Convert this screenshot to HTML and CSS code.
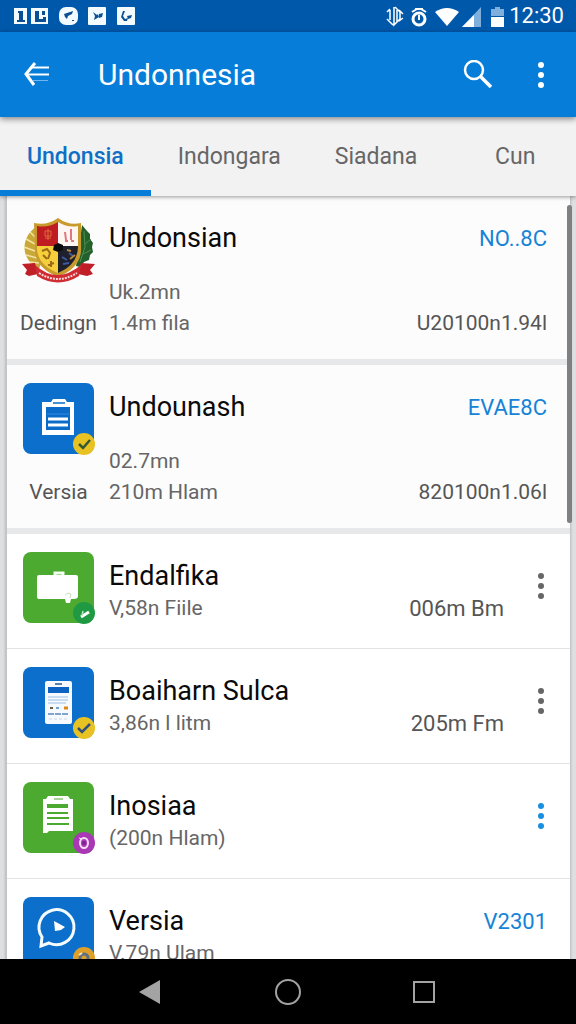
FILE: index.html
```html
<!DOCTYPE html>
<html lang="id">
<head>
  <meta charset="UTF-8">
  <meta name="viewport" content="width=device-width, initial-scale=1">
  <title>Undonnesia</title>
  <link rel="stylesheet" href="styles.css">
</head>
<body>

  <div class="status-bar">
    <svg class="status-left" width="124" height="20" viewBox="0 0 124 20">
      <g fill="#f4fbff">
        <rect x="0" y="2" width="13" height="16"/>
        <rect x="17" y="2" width="17" height="16"/>
        <rect x="45" y="1" width="19" height="18" rx="7"/>
        <rect x="74" y="1" width="18" height="18" rx="1"/>
        <rect x="103" y="1" width="18" height="18" rx="1"/>
      </g>
      <g fill="#0b4f92">
        <path d="M4 5h5v9h2v2H3v-2h2V7H4z"/>
        <path d="M21 5h4v8h4v-2h3v5H21zM28 5h3v4h-3z"/>
        <path d="M50 8l9-3-1 3-4 2-1 3-2-2zM58 14h2v1h-2z"/>
        <path d="M79 6l4 3 1-1 1 3-5 3 1-4zM85 8l4-1-1 4-3 1z"/>
        <path d="M109 5h2l-2 5 2 3 3-1-1 3h-3l-3-4zM113 10l5-1-1 3-3 1z"/>
      </g>
    </svg>
    <svg width="120" height="24" viewBox="0 0 120 24">
      <g fill="none" stroke="#fff" stroke-width="2">
        <path d="M6 6v10M3 8l3-3M10 3v18l6-6V8l-5-5M3 15l6 6M13 6v12M15 6l4 4M15 17l4-3" stroke-width="1.5"/>
        <circle cx="35" cy="15" r="6" stroke-width="3"/>
        <path d="M28 8l5-3M37 5l5 3M31 5h8M35 11v5"/>
      </g>
      <path d="M51 8q12-8 24 0L63 22z" fill="#fff"/>
      <path d="M97 3v20H78z" fill="#7fb0dd"/>
      <path d="M90 11v12H78z" fill="#fff"/>
      <path d="M107 5h4V3h5v2h4v7h-13z" fill="#7fb0dd"/>
      <path d="M107 13h13v10h-13z" fill="#fff"/>
    </svg>
    <span class="clock">12:30</span>
  </div>

  <header class="app-bar">
    <button class="icon-btn" aria-label="Back">
      <svg width="28" height="26" viewBox="0 0 28 26" fill="none" stroke="#fff" stroke-width="2">
        <path d="M12 1L3 12l8 11" stroke-width="3"/>
        <path d="M9 5.500h17M3 12.500h23"/>
        <path d="M10 18.500h15" stroke="#6fb6f0" stroke-width="1"/>
      </svg>
    </button>
    <h1 class="app-title">Undonnesia</h1>
    <button class="icon-btn search" aria-label="Search">
      <svg width="30" height="30" viewBox="0 0 30 30" fill="none" stroke="#fff">
        <circle cx="11" cy="10" r="9" stroke-width="2.500"/>
        <path d="M17 16l11 11" stroke-width="3.500"/>
      </svg>
    </button>
    <button class="icon-btn dots" aria-label="More"><i></i><i></i><i></i></button>
  </header>

  <nav class="tabs">
    <button class="tab active">Undonsia</button>
    <button class="tab">Indongara</button>
    <button class="tab">Siadana</button>
    <button class="tab">Cun</button>
  </nav>

  <main class="content">
    <ul class="list">
      <li class="row large">
        <div class="media">
          <svg class="crest" width="74" height="71" viewBox="0 0 74 71">
            <path d="M14 10C2 18-1 33 7 44l10 8 3-8-6-14z" fill="#c9a83a"/>
            <path d="M4 22l9 5M2 30l11 4M4 38l11 3M8 15l6 6M8 45l9 1" stroke="#f3e3a0" stroke-width="1.500"/>
            <path d="M60 8l5 6 3 3 0 5 3 4-1 4 1 5-3 3-1 5-5 2-4 5-4-1 3-19z" fill="#24602b"/>
            <path d="M62 14l1 16-5 15M69 22l-6 5M69 33l-8 4" stroke="#4e8f4f" fill="none"/>
            <path d="M12 6q13 3 24-5 11 8 23 5v28q-1 17-23 26-22-9-23-26z" fill="#c99b2d"/>
            <path d="M15 9q11 2 21-4v24H15z" fill="#bf1d22"/>
            <path d="M36 5q10 6 20 4v20H36z" fill="#fff5f2"/>
            <path d="M15 29h21v27Q16 48 15 32z" fill="#f5cf3c"/>
            <path d="M36 29h20q0 19-20 27z" fill="#20202c"/>
            <path d="M23 14h6v5h-6zM23 21h6M26 12v11" stroke="#df6b3c" fill="none"/>
            <path d="M43 15l1 8M49 12v11M43 24h3M49 24h3" stroke="#e0797c" stroke-width="2"/>
            <path d="M20 34l5-2 3 4-2 6M21 38l4 4M26 48l6-2M29 44v6" stroke="#9b6a14" fill="none" stroke-width="2"/>
            <path d="M32 28l4-2 5 2v5l-5 2-5-2z" fill="#0b0b0b"/>
            <path d="M40 40l5 3M47 36l4 3M41 47l6-1" stroke="#3d5aa0" stroke-width="2"/>
            <path d="M48 42l5-4M45 33l4 1" stroke="#b7893a" stroke-width="2"/>
            <path d="M0 47l13-1 3 11-9 2-4-2 2-4zM73 47l-14-1-3 11 9 2 6-2-3-4z" fill="#c01f28"/>
            <path d="M13 48q22 20 46 0l-2 11q-21 13-42 0z" fill="#cf2c33"/>
            <path d="M17 56q19 12 38 0" fill="none" stroke="#f7d9d6" stroke-width="2" stroke-dasharray="2 1"/>
          </svg>
          <span class="label">Dedingn</span>
        </div>
        <div class="info">
          <h2>Undonsian</h2>
          <p>Uk.2mn</p>
          <p>1.4m fila</p>
        </div>
        <div class="side">
          <a class="code" href="#">NO..8C</a>
          <span class="amount">U20100n1.94l</span>
        </div>
      </li>

      <li class="row large">
        <div class="media">
          <div class="tile blue">
            <svg width="71" height="71" viewBox="0 0 71 71">
              <path d="M19 19h9l2-3h12l2 3h7v33H19z" fill="#fff"/>
              <path d="M23 24h24v23H23z" fill="#0b6bc8"/>
              <path d="M30 20h12" stroke="#0b6bc8" stroke-width="1.500"/>
              <path d="M25 36h20M25 42h20" stroke="#fff" stroke-width="3"/>
              <path d="M24 31h22" stroke="#358be0"/>
            </svg>
            <svg class="badge" width="22" height="22" viewBox="0 0 22 22">
              <circle cx="11" cy="11" r="11" fill="#e8c222"/>
              <path d="M6 11l4 4 7-8" fill="none" stroke="#33592f" stroke-width="2.500"/>
            </svg>
          </div>
          <span class="label">Versia</span>
        </div>
        <div class="info">
          <h2>Undounash</h2>
          <p>02.7mn</p>
          <p>210m Hlam</p>
        </div>
        <div class="side">
          <a class="code" href="#">EVAE8C</a>
          <span class="amount">820100n1.06l</span>
        </div>
      </li>

      <li class="row">
        <div class="media">
          <div class="tile green">
            <svg width="71" height="71" viewBox="0 0 71 71">
              <path d="M32 23v-2h8v2" fill="none" stroke="#f3fff0" stroke-width="3"/>
              <path d="M16 23h37q2 0 2 2v19q0 3-4 3h-3l-1 4h-4l-1-4H16q-2 0-2-2V25q0-2 2-2z" fill="#fff"/>
              <path d="M42 43l3-2 3 1-1 4" fill="none" stroke="#c4e2ba"/>
            </svg>
            <svg class="badge" width="22" height="22" viewBox="0 0 22 22">
              <circle cx="11" cy="11" r="11" fill="#1f9a43"/>
              <path d="M8 15l8-5" stroke="#fff" stroke-width="3"/>
              <path d="M9 14l1-5" stroke="#b7e5c2" stroke-width="1.500"/>
            </svg>
          </div>
        </div>
        <div class="info">
          <h2>Endalfika</h2>
          <p>V,58n Fiile</p>
        </div>
        <span class="amount">006m Bm</span>
        <button class="dots" aria-label="More"><i></i><i></i><i></i></button>
      </li>

      <li class="row">
        <div class="media">
          <div class="tile blue">
            <svg width="71" height="71" viewBox="0 0 71 71">
              <rect x="22" y="14" width="27" height="43" rx="2" fill="#f6faff"/>
              <path d="M32 17h7" stroke="#27588f" stroke-width="1.500"/>
              <path d="M25 20h21v6H25z" fill="#0b62c0"/>
              <path d="M25 30h20M25 33h20M25 36h18" stroke="#9dbde0"/>
              <path d="M27 41h3" stroke="#6b5a3c" stroke-width="2"/>
              <path d="M33 41h3" stroke="#6fa3d8" stroke-width="2"/>
              <path d="M41 41h4" stroke="#d9861c" stroke-width="3"/>
              <path d="M25 47h20" stroke="#7ea5d0" stroke-width="2" stroke-dasharray="6 1"/>
              <path d="M26 52h18" stroke="#c9d8ea" stroke-dasharray="3 2"/>
            </svg>
            <svg class="badge" width="22" height="22" viewBox="0 0 22 22">
              <circle cx="11" cy="11" r="11" fill="#e8c222"/>
              <path d="M5 11l4 4 8-8" fill="none" stroke="#33507a" stroke-width="2.500"/>
            </svg>
          </div>
        </div>
        <div class="info">
          <h2>Boaiharn Sulca</h2>
          <p>3,86n l litm</p>
        </div>
        <span class="amount">205m Fm</span>
        <button class="dots" aria-label="More"><i></i><i></i><i></i></button>
      </li>

      <li class="row">
        <div class="media">
          <div class="tile green">
            <svg width="71" height="71" viewBox="0 0 71 71">
              <path d="M20 17h3l2-3h20l2 3h3v32H26l-2 2h-4z" fill="#fff"/>
              <path d="M31 17h9" stroke="#4caa30"/>
              <path d="M24 24h21" stroke="#4caa30" stroke-width="4"/>
              <path d="M24 31h21M24 36h22M24 42h22" stroke="#4caa30" stroke-width="2"/>
            </svg>
            <svg class="badge" width="22" height="22" viewBox="0 0 22 22">
              <circle cx="11" cy="11" r="11" fill="#a838b4"/>
              <ellipse cx="11" cy="11" rx="4" ry="5" fill="none" stroke="#f6def8" stroke-width="2"/>
              <circle cx="11" cy="11" r="2" fill="#7d2390"/>
              <path d="M6 6l3 1" stroke="#f6def8"/>
            </svg>
          </div>
        </div>
        <div class="info">
          <h2>Inosiaa</h2>
          <p>(200n Hlam)</p>
        </div>
        <button class="dots accent" aria-label="More"><i></i><i></i><i></i></button>
      </li>

      <li class="row">
        <div class="media">
          <div class="tile blue">
            <svg width="71" height="71" viewBox="0 0 71 71">
              <path d="M19 40a17.500 17.500 0 1 1 7 6l-8 3z" fill="none" stroke="#f3fbff" stroke-width="3"/>
              <path d="M31 24l11 6-4 3-6 1z" fill="#fff"/>
            </svg>
            <svg class="badge" width="22" height="22" viewBox="0 0 22 22">
              <circle cx="11" cy="11" r="11" fill="#dfa02a"/>
              <circle cx="11" cy="11" r="4" fill="none" stroke="#5d6f80" stroke-width="3"/>
              <path d="M6 8l3-2" stroke="#f4e6c4" stroke-width="2"/>
            </svg>
          </div>
        </div>
        <div class="info">
          <h2>Versia</h2>
          <p>V.79n Ulam</p>
        </div>
        <div class="side">
          <a class="code" href="#">V2301</a>
        </div>
      </li>
    </ul>
    <div class="scroll-thumb"></div>
  </main>

  <footer class="nav-bar">
    <button aria-label="Back">
      <svg width="28" height="28" viewBox="0 0 28 28"><path d="M22 2v24L1 14z" fill="#a3a3a3"/></svg>
    </button>
    <button aria-label="Home">
      <svg width="28" height="28" viewBox="0 0 28 28"><circle cx="14" cy="14" r="12" fill="none" stroke="#a3a3a3" stroke-width="2"/></svg>
    </button>
    <button aria-label="Recent apps">
      <svg width="28" height="28" viewBox="0 0 28 28"><rect x="4" y="4" width="20" height="20" fill="none" stroke="#a3a3a3" stroke-width="2"/></svg>
    </button>
  </footer>

</body>
</html>
```
FILE: styles.css
```css
* {
  box-sizing: border-box;
}

body {
  margin: 0;
  height: 100vh;
  display: flex;
  flex-direction: column;
  overflow: hidden;
  font-family: Roboto, "Liberation Sans", sans-serif;
  background: #dedfe1;
  color: #0a0a0a;
}

button {
  border: none;
  background: none;
  padding: 0;
  font-family: inherit;
  cursor: pointer;
}

svg {
  display: block;
  flex: none;
}

h1,
h2,
p,
ul {
  margin: 0;
  padding: 0;
  font-weight: 400;
}

/* Status bar */
.status-bar {
  flex: none;
  display: flex;
  align-items: center;
  height: 32px;
  padding: 0 12px 0 14px;
  background: #0058aa;
  color: #fff;
}

.status-left {
  margin-right: auto;
}

.clock {
  margin-left: 5px;
  font-size: 22px;
  line-height: 32px;
}

/* App bar */
.app-bar {
  flex: none;
  display: flex;
  align-items: center;
  height: 85px;
  padding: 0 23px;
  background: #057dd9;
  color: #fff;
  box-shadow: 0 2px 6px rgba(0, 0, 0, 0.45);
  z-index: 2;
}

.app-title {
  flex: 1;
  margin-left: 47px;
  font-size: 30px;
  line-height: 40px;
}

.search {
  margin-right: 36px;
}

.dots {
  display: flex;
  flex-direction: column;
  align-items: center;
  justify-content: center;
  gap: 4px;
  width: 24px;
  color: #666;
}

.dots i {
  width: 6px;
  height: 6px;
  border-radius: 50%;
  background: currentColor;
}

.app-bar .dots {
  color: #fff;
}

/* Tabs */
.tabs {
  flex: none;
  display: flex;
  height: 79px;
  background: #f2f2f2;
  box-shadow: 0 1px 4px rgba(0, 0, 0, 0.4);
  overflow: hidden;
  z-index: 1;
}

.tab {
  flex: none;
  padding: 6px 27px 0;
  border-bottom: 6px solid transparent;
  font-size: 23px;
  color: #666;
}

.tab:last-child {
  min-width: 142px;
}

.tab.active {
  border-color: #057dd9;
  font-weight: 500;
  color: #0f6fc6;
}

/* List */
.content {
  position: relative;
  flex: 1;
  min-height: 0;
  overflow: hidden;
  padding: 0 6px;
}

.list {
  list-style: none;
  background: #fff;
  border-left: 1px solid #c4c5c7;
  box-shadow: 0 0 3px rgba(0, 0, 0, 0.3);
}

.row {
  display: flex;
  gap: 15px;
  padding: 18px 17px 24px 16px;
  border-bottom: 1px solid #e2e3e5;
}

.row.large {
  padding-bottom: 20px;
  border-bottom: 6px solid #e7e8ea;
  background: #fcfcfd;
}

.media {
  flex: none;
  display: flex;
  flex-direction: column;
  align-items: center;
  justify-content: space-between;
  width: 71px;
}

.crest {
  margin-top: 3px;
}

.label {
  font-size: 21px;
  line-height: 31px;
  color: #555;
  white-space: nowrap;
}

.tile {
  position: relative;
  width: 71px;
  height: 71px;
  border-radius: 8px;
}

.blue {
  background: #0b6fcb;
}

.green {
  background: #4caa30;
}

.badge {
  position: absolute;
  right: -1px;
  bottom: -1px;
}

.info {
  flex: 1;
  padding-top: 7px;
  white-space: nowrap;
}

.info h2 {
  font-size: 27px;
  line-height: 34px;
}

.info p {
  font-size: 21px;
  line-height: 31px;
  color: #666;
}

.large .info h2 {
  margin-bottom: 22px;
}

.side {
  display: flex;
  flex-direction: column;
  align-items: flex-end;
  justify-content: space-between;
  padding: 8px 6px 0 0;
}

.code {
  font-size: 22px;
  line-height: 34px;
  color: #1583d6;
  text-decoration: none;
}

.amount {
  font-size: 21px;
  line-height: 31px;
  color: #555;
}

.row > .amount {
  margin-right: 10px;
  padding-top: 41px;
  font-size: 22px;
}

.row > .dots {
  height: 68px;
}

.dots.accent {
  color: #1a8fe0;
}

.scroll-thumb {
  position: absolute;
  top: 9px;
  right: 4px;
  width: 5px;
  height: 318px;
  border-radius: 3px;
  background: #808080;
}

/* Navigation bar */
.nav-bar {
  flex: none;
  display: flex;
  align-items: center;
  justify-content: center;
  gap: 108px;
  height: 65px;
  background: #000;
  z-index: 1;
}
```
